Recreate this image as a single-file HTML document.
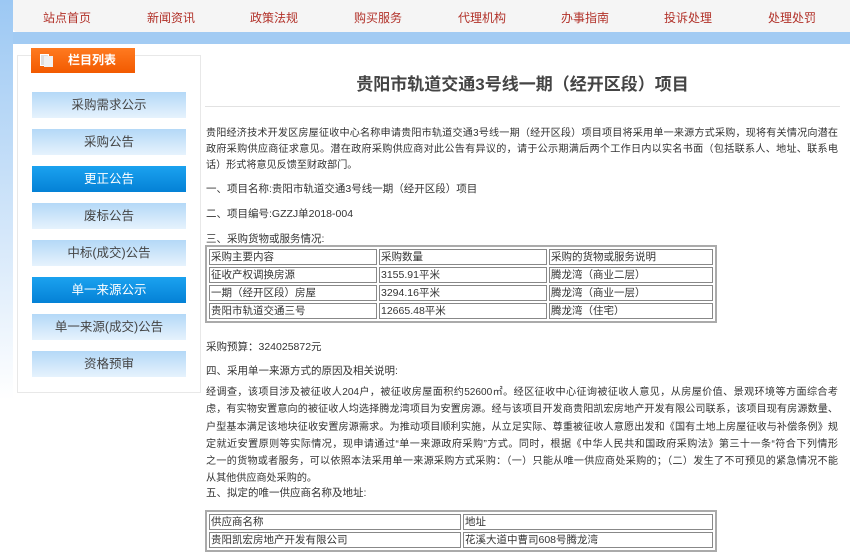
<!DOCTYPE html>
<html><head><meta charset="utf-8"><style>
*{margin:0;padding:0;box-sizing:border-box}
body{width:850px;height:551px;overflow:hidden;background:#fff;font-family:"Liberation Sans","Noto Sans CJK SC",sans-serif;position:relative;color:#333}
.strip{position:absolute;left:0;top:0;width:13px;height:400px;background:linear-gradient(#9cc8f3,#d6e8fa 60%,#fff)}
.nav{position:absolute;left:13px;top:0;width:837px;height:32px;background:#f5f5f5;border-radius:0 0 0 4px}
.nav span{position:absolute;top:9px;font-size:12px;color:#b2322a}
.band{position:absolute;left:13px;top:32px;width:837px;height:12px;background:#a2cbf3}
.side{position:absolute;left:17px;top:55px;width:184px;height:338px;border:1px solid #e8e8e8}
.hd{position:absolute;left:31px;top:48px;width:104px;height:25px;background:linear-gradient(#ff7a20,#f25a00);color:#fff;font-size:12px;font-weight:bold;line-height:25px;padding-left:37px}
.hd i{position:absolute;left:9px;top:6px;width:9px;height:12px;background:#ddd;border:1px solid #fff}
.hd b{position:absolute;left:13px;top:8px;width:9px;height:11px;background:#f0f0f0}
.m{position:absolute;left:32px;width:154px;height:26px;line-height:26px;text-align:center;font-size:12.5px;color:#444;background:linear-gradient(#b4d8f7,#e6f2fd)}
.m.a{background:linear-gradient(#1ba2ef,#0481d6);color:#fff}
h1{position:absolute;left:205px;width:635px;top:70px;text-align:center;font-size:17px;color:#444;font-weight:bold}
.hr{position:absolute;left:205px;top:106px;width:635px;height:1px;background:#e2e2e2}
.t{position:absolute;left:206px;font-size:10.5px;color:#333;line-height:16px;white-space:nowrap}
.p{font-size:10.1px;width:632px}
.p div{white-space:nowrap;width:632px;text-align:justify;text-align-last:justify;text-justify:inter-character}
.p div.l{text-align-last:left}
table{position:absolute;left:205px;border:2px solid #aaa;border-collapse:separate;border-spacing:2px;font-size:10.5px;color:#333}
td{border:1px solid #888;height:16px;padding:0 1px;line-height:14px}
</style></head><body>
<div class="strip"></div>
<div class="nav">
<span style="left:30px">站点首页</span><span style="left:134px">新闻资讯</span><span style="left:237px">政策法规</span><span style="left:341px">购买服务</span>
<span style="left:445px">代理机构</span><span style="left:548px">办事指南</span><span style="left:651px">投诉处理</span><span style="left:755px">处理处罚</span>
</div>
<div class="band"></div>
<div class="side"></div>
<div class="hd"><i></i><b></b>栏目列表</div>
<div class="m" style="top:92px">采购需求公示</div>
<div class="m" style="top:129px">采购公告</div>
<div class="m a" style="top:166px">更正公告</div>
<div class="m" style="top:203px">废标公告</div>
<div class="m" style="top:240px">中标(成交)公告</div>
<div class="m a" style="top:277px">单一来源公示</div>
<div class="m" style="top:314px">单一来源(成交)公告</div>
<div class="m" style="top:351px">资格预审</div>
<h1>贵阳市轨道交通3号线一期（经开区段）项目</h1>
<div class="hr"></div>
<div class="t p" style="top:126px">
<div>贵阳经济技术开发区房屋征收中心名称申请贵阳市轨道交通3号线一期（经开区段）项目项目将采用单一来源方式采购，现将有关情况向潜在</div>
<div>政府采购供应商征求意见。潜在政府采购供应商对此公告有异议的，请于公示期满后两个工作日内以实名书面（包括联系人、地址、联系电</div>
<div class="l">话）形式将意见反馈至财政部门。</div></div>
<div class="t" style="top:181px">一、项目名称:贵阳市轨道交通3号线一期（经开区段）项目</div>
<div class="t" style="top:206px">二、项目编号:GZZJ单2018-004</div>
<div class="t" style="top:231px">三、采购货物或服务情况:</div>
<table style="top:245px;width:512px">
<tr><td style="width:168px">采购主要内容</td><td style="width:168px">采购数量</td><td>采购的货物或服务说明</td></tr>
<tr><td>征收产权调换房源</td><td>3155.91平米</td><td>腾龙湾（商业二层）</td></tr>
<tr><td>一期（经开区段）房屋</td><td>3294.16平米</td><td>腾龙湾（商业一层）</td></tr>
<tr><td>贵阳市轨道交通三号</td><td>12665.48平米</td><td>腾龙湾（住宅）</td></tr>
</table>
<div class="t" style="top:339px">采购预算：324025872元</div>
<div class="t" style="top:363px">四、采用单一来源方式的原因及相关说明:</div>
<div class="t p" style="top:384px;line-height:17.3px">
<div>经调查，该项目涉及被征收人204户，被征收房屋面积约52600㎡。经区征收中心征询被征收人意见，从房屋价值、景观环境等方面综合考</div>
<div>虑，有实物安置意向的被征收人均选择腾龙湾项目为安置房源。经与该项目开发商贵阳凯宏房地产开发有限公司联系，该项目现有房源数量、</div>
<div>户型基本满足该地块征收安置房源需求。为推动项目顺利实施，从立足实际、尊重被征收人意愿出发和《国有土地上房屋征收与补偿条例》规</div>
<div>定就近安置原则等实际情况，现申请通过“单一来源政府采购”方式。同时，根据《中华人民共和国政府采购法》第三十一条“符合下列情形</div>
<div>之一的货物或者服务，可以依照本法采用单一来源采购方式采购：（一）只能从唯一供应商处采购的；（二）发生了不可预见的紧急情况不能</div>
<div class="l">从其他供应商处采购的。</div></div>
<div class="t" style="top:485px">五、拟定的唯一供应商名称及地址:</div>
<table style="top:510px;width:512px">
<tr><td style="width:252px">供应商名称</td><td>地址</td></tr>
<tr><td>贵阳凯宏房地产开发有限公司</td><td>花溪大道中曹司608号腾龙湾</td></tr>
</table>
</body></html>
